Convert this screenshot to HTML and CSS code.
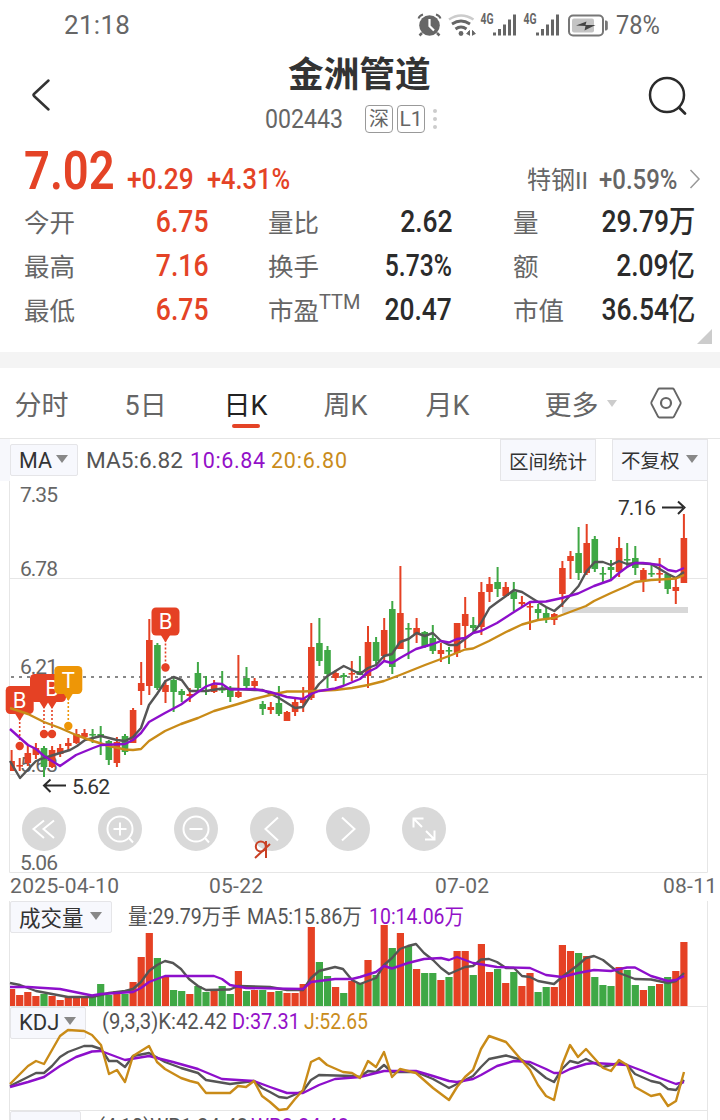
FILE: index.html
```html
<!DOCTYPE html>
<html lang="zh-CN">
<head>
<meta charset="utf-8">
<title>金洲管道 002443</title>
<link rel="stylesheet" href="styles.css">
</head>
<body>
<div class="phone">
  <header class="status">
    <span class="clock">21:18</span>
    <svg class="status-icons" width="192" height="28" viewBox="416 10 192 28">
      <g fill="#666">
        <circle cx="429.5" cy="24.5" r="10.3"/>
        <path d="M422 32l-2.500 2.500M437 32l2.500 2.500" stroke="#666" stroke-width="2.5"/>
      </g>
      <path d="M418.5 17.5q1-3 4.500-4M440.500 17.500q-1-3-4.500-4" fill="none" stroke="#666" stroke-width="2"/>
      <path d="M429.500 18v7l4.500 4.500" fill="none" stroke="#fff" stroke-width="2.200"/>
      <path d="M449 18.500q12-8 24.500 0" fill="none" stroke="#ccc" stroke-width="2.500"/>
      <path d="M452 23q9-6 18 0M455.500 28q5.500-4 11 0" fill="none" stroke="#666" stroke-width="2.800"/>
      <circle cx="461" cy="32.500" r="2.400" fill="#666"/>
      <path d="M466.500 33l3-3.500v5M472.500 34.500v-5l3 3.500" fill="#666" stroke="#666" stroke-width="1"/>
      <g class="net"><text x="480.500" y="22.500" textLength="13" lengthAdjust="spacingAndGlyphs">4G</text><text x="523.500" y="22.500" textLength="13" lengthAdjust="spacingAndGlyphs">4G</text></g>
      <path d="M494.500 31.500v3M499.500 28v6.500M504.500 23.500v11M509.500 18.500v16M514.500 13.500v21M537.500 31.500v3M542.500 28v6.500M547.500 23.500v11M552.500 18.500v16M557.500 13.500v21" stroke="#666" stroke-width="3"/>
      <rect x="569" y="14.500" width="34" height="20" rx="4" fill="none" stroke="#777" stroke-width="2"/>
      <rect x="572" y="17.500" width="22" height="14" rx="2" fill="#c4c4c4"/>
      <path d="M605 19.500h1q1.800 0 1.800 2v6q0 2-1.800 2h-1z" fill="#777"/>
      <path d="M576 24.500l10.500-4-1 3.500h10l-11 5.500 1-4.500z" fill="#444"/>
    </svg>
    <span class="battery">78%</span>
  </header>

  <div class="titlebar">
    <svg class="back" width="24" height="36" viewBox="0 0 24 36"><path d="M20.500 4.500L6 18Q5 19 6 20L20.500 33.500" fill="none" stroke="#333" stroke-width="2.500" stroke-linecap="round"/></svg>
    <div class="title">
      <h1>金洲管道</h1>
      <div class="code-row">
        <span class="code">002443</span>
        <span class="badge">深</span><span class="badge latin">L1</span>
        <span class="dots"><i></i><i></i><i></i></span>
      </div>
    </div>
    <svg class="search" width="44" height="44" viewBox="0 0 44 44"><circle cx="21" cy="20" r="17" fill="none" stroke="#2b2b2b" stroke-width="2.500"/><path d="M33 32.500l6 6" stroke="#2b2b2b" stroke-width="2.800" stroke-linecap="round"/></svg>
  </div>

  <div class="quote">
    <span class="price">7.02</span>
    <span class="change">+0.29</span>
    <span class="change pct">+4.31%</span>
    <span class="sector">特钢II</span>
    <span class="sector-pct">+0.59%</span>
    <svg class="go" width="12" height="20" viewBox="0 0 12 20"><path d="M1.500 1L10 10 1.500 19" fill="none" stroke="#999" stroke-width="1.500"/></svg>
  </div>

  <div class="stats">
    <div class="stat up"><span>今开</span><b>6.75</b></div>
    <div class="stat"><span>量比</span><b>2.62</b></div>
    <div class="stat"><span>量</span><b>29.79万</b></div>
    <div class="stat up"><span>最高</span><b>7.16</b></div>
    <div class="stat"><span>换手</span><b class="percent">5.73%</b></div>
    <div class="stat"><span>额</span><b>2.09亿</b></div>
    <div class="stat up"><span>最低</span><b>6.75</b></div>
    <div class="stat"><span>市盈<sup>TTM</sup></span><b>20.47</b></div>
    <div class="stat"><span>市值</span><b>36.54亿</b></div>
  </div>
  <div class="corner-row"><i class="corner"></i></div>
  <div class="band"></div>

  <nav class="tabs">
    <span class="t1">分时</span><span class="t2">5日</span><span class="t3 active">日K</span><span class="t4">周K</span><span class="t5">月K</span>
    <span class="t6">更多<i class="tri pale"></i></span>
    <svg width="34" height="34" viewBox="0 0 34 34"><path d="M10.500 2.500h13q1 0 1.500 1l6.500 12.500q.5 1 0 2L25 30.500q-.5 1-1.500 1h-13q-1 0-1.500-1L2.500 18q-.5-1 0-2L9 3.500q.5-1 1.500-1z" fill="none" stroke="#666" stroke-width="1.800"/><circle cx="17" cy="17" r="5" fill="none" stroke="#666" stroke-width="2.200"/></svg>
  </nav>

  <section class="chart">
    <svg class="plot" id="plot" width="720" height="682" viewBox="0 438 720 682">
      <path d="M0 438.500H720" stroke="#e6e6e6"/>
      <rect x="0" y="439" width="10" height="42" fill="#f7f8fc"/>
      <path d="M9.500 481V872.500H707.500V481M9.500 578.500H707.500M9.500 774.500H707.500M9.500 901V1120M707.500 901V1120M9.500 1006.500H707.500M9.500 1110.500H707.500" fill="none" stroke="#e6e6e6"/>
      <g class="axis">
        <text x="20" y="502" textLength="38">7.35</text>
        <text x="20" y="576" textLength="38">6.78</text>
        <text x="20" y="674" textLength="38">6.21</text>
        <text x="20" y="772" textLength="38">5.63</text>
        <text x="20" y="870" textLength="38">5.06</text>
        <text x="10" y="892.500" textLength="109">2025-04-10</text>
        <text x="209" y="892.500" textLength="54">05-22</text>
        <text x="435" y="892.500" textLength="54">07-02</text>
        <text x="663" y="892.500" textLength="54">08-11</text>
      </g>
      <path d="M11 677H707" stroke="#888" stroke-width="2" stroke-dasharray="3 5"/>
      <rect x="562" y="607" width="126" height="6" fill="#d8d8d8"/>
      <g id="candles"></g>
      <g id="volumes"></g>
      <g id="markers"></g>
      <g id="lines"></g>
      <g class="peak">
        <text x="72" y="794" textLength="38">5.62</text>
        <text x="618" y="515" textLength="38">7.16</text>
        <path d="M66 785.500H45M50.500 779.500L44 785.500l6.500 6.500M662 507.500h21M678 501.500l6.500 6-6.500 6.500" fill="none" stroke="#2b2b2b" stroke-width="2"/>
      </g>
      <g class="legend">
        <text x="86" y="468" textLength="97" lengthAdjust="spacingAndGlyphs">MA5:6.82</text>
        <text class="purple" x="190" y="468" textLength="75">10:6.84</text>
        <text class="gold" x="271" y="468" textLength="76">20:6.80</text>
        <text x="128" y="924" textLength="113" lengthAdjust="spacingAndGlyphs">量:29.79万手</text>
        <text x="247" y="924" textLength="115" lengthAdjust="spacingAndGlyphs">MA5:15.86万</text>
        <text class="purple" x="369" y="924" textLength="95" lengthAdjust="spacingAndGlyphs">10:14.06万</text>
      </g>
    </svg>

    <div class="pill ma">MA<i class="tri"></i></div>
    <div class="pill range">区间统计</div>
    <div class="pill adjust">不复权<i class="tri"></i></div>
    <div class="pill vol">成交量<i class="tri"></i></div>
    <div class="pill kdj">KDJ<i class="tri"></i></div>
    <div class="pill wr"></div>
    <svg class="plot over" width="720" height="682" viewBox="0 438 720 682">
      <g id="kdj-lines"></g>
      <g class="legend">
        <text x="102" y="1029" textLength="125" lengthAdjust="spacingAndGlyphs">(9,3,3)K:42.42</text>
        <text class="purple" x="232" y="1029" textLength="68" lengthAdjust="spacingAndGlyphs">D:37.31</text>
        <text class="gold" x="304" y="1029" textLength="64" lengthAdjust="spacingAndGlyphs">J:52.65</text>
        <text x="98" y="1134" textLength="150" lengthAdjust="spacingAndGlyphs">(4,10)WR1:24.48</text>
        <text class="purple" x="251" y="1134" textLength="98" lengthAdjust="spacingAndGlyphs">WR2:24.48</text>
      </g>
    </svg>

    <div class="controls">
      <span><svg viewBox="0 0 44 44"><path d="M22 13.500L11.500 22 22 31M32 13.500L21.500 22 32 31"/></svg></span>
      <span><svg viewBox="0 0 44 44"><circle cx="22" cy="22" r="12.500"/><path d="M15.500 22h13M22 15.500v13M31 31l4 4.500"/></svg></span>
      <span><svg viewBox="0 0 44 44"><circle cx="22" cy="22" r="12.500"/><path d="M15.500 22h13M31 31l4 4.500"/></svg></span>
      <span><svg viewBox="0 0 44 44"><path d="M28 10.500L15.500 22 28 33.500"/></svg><svg class="scribble" viewBox="0 0 18 20"><path d="M13 2v17M2 19L17 5"/><circle cx="7.800" cy="7.500" r="5"/></svg></span>
      <span><svg viewBox="0 0 44 44"><path d="M16 10.500L28.500 22 16 33.500"/></svg></span>
      <span><svg viewBox="0 0 44 44"><path d="M11.500 20.500v-9h10M11.500 11.500l8.500 8.500M24 24l8.500 8.500M23 32.500h9.500v-9"/></svg></span>
    </div>
  </section>
</div>
<script src="chart.js"></script>
</body>
</html>
```
FILE: styles.css
```css
* { box-sizing: border-box; }
body { margin: 0; background: #fff; font-family: Roboto, "Noto Sans CJK SC", sans-serif; color: #666; }
.phone { width: 720px; height: 1120px; overflow: hidden; background: #fff; }
.phone span, .phone b { white-space: nowrap; }

.status { display: flex; align-items: center; height: 50px; padding-left: 64px; font-size: 26px; }
.clock { width: 352px; letter-spacing: .3px; }
.status-icons { display: block; flex: none; }
.net text { font: 700 14px Roboto, sans-serif; fill: #666; }
.battery { margin-left: 8px; transform: scaleX(.91); transform-origin: left; }

.titlebar { display: flex; height: 90px; padding: 0 30px 0 28px; align-items: flex-start; }
.back { margin-top: 26px; flex: none; }
.title { flex: 1; padding-left: 213px; }
.title h1 { margin: 0 0 0 23px; height: 50px; font-size: 35.7px; line-height: 51px; font-weight: 700; color: #333; }
.code-row { display: flex; align-items: center; height: 38px; }
.code { width: 100px; font-size: 26px; transform: scaleX(.89); transform-origin: left; }
.badge { width: 28px; height: 28px; border: 1px solid #999; border-radius: 4px; font-size: 20px; line-height: 26px; text-align: center; margin-right: 4px; }
.badge.latin { font-size: 21px; }
.dots { display: flex; flex-direction: column; gap: 4px; margin-left: 4px; }
.dots i { width: 4px; height: 4px; border-radius: 50%; background: #ccc; }
.search { flex: none; margin: 25px 0 0; }

.quote { display: flex; align-items: baseline; height: 60px; padding-left: 24px; line-height: 62px; }
.quote span { transform-origin: left; transform: scaleX(.87); }
.quote .price { width: 103px; font-size: 53px; font-weight: 600; color: #e44326; transform: scaleX(.855); }
.quote .change { width: 80px; font-size: 29px; font-weight: 500; color: #e44326; transform: scaleX(.905); }
.quote .pct { width: 320px; transform: scaleX(.875); }
.quote .sector { width: 72px; font-size: 24.5px; transform: scaleX(.98); }
.quote .sector-pct { width: 90px; font-size: 28px; font-weight: 500; transform: scaleX(.855); }

.stats { display: grid; grid-template-columns: 183px 184px 182px; column-gap: 61px; grid-auto-rows: 44px; padding-left: 24px; }
.stat { display: flex; justify-content: space-between; align-items: center; font-size: 25.5px; line-height: 44px; }
.stat b { font-size: 30.5px; font-weight: 500; color: #2b2b2b; transform: scaleX(.865); transform-origin: right; }
.stat b.percent { transform: scaleX(.81); }
.stat span { padding-top: 1px; height: 44px; }
.stat sup { font-size: 20px; line-height: 0; position: relative; top: -2px; }
.stat.up b { color: #e44326; transform: translateX(1px) scaleX(.87); }
.corner-row { height: 20px; padding: 0 8px 8px; display: flex; justify-content: flex-end; align-items: flex-end; }
.corner { width: 15px; height: 15px; flex: none; background: #ccc; clip-path: polygon(100% 0, 100% 100%, 0 100%); }
.band { height: 16px; background: #f4f4f4; }

.tabs { display: grid; grid-template-columns: 110px 99px 100px 102px 119px 104px 40px; height: 70px; padding-left: 14.5px; align-items: center; font-size: 27px; }
.tabs > span { line-height: 70px; height: 70px; padding-top: 3px; }
.active { color: #222; position: relative; }
.active::after { content: ""; position: absolute; left: 8px; top: 56px; width: 28px; height: 4px; border-radius: 2px; background: #e44326; }
.tri { display: inline-block; border: 6px solid transparent; border-top: 8px solid #888; border-bottom: 0; vertical-align: middle; margin-left: 5px; }
.tri.pale { border-top-color: #ccc; border-left-width: 5.5px; border-right-width: 5.5px; border-top-width: 7px; margin: -8px 0 0 8px; }

.chart { position: relative; height: 682px; }
.plot { display: block; }
.over { position: absolute; left: 0; top: 0; }
.axis text { font-size: 21px; fill: #666; }
.legend text { font-size: 21.5px; fill: #555; }
.legend .purple { fill: #9310c8; }
.legend .gold { fill: #c98c1b; }
.peak text { font-size: 21px; fill: #333; }
.flag { font-size: 22px; fill: #fff; text-anchor: middle; }

.pill { position: absolute; display: flex; align-items: center; left: 10px; height: 32px; padding-left: 8px; border: 1px solid #e5e5e8; border-radius: 2px; background: #f7f8fd; color: #333; font-size: 22px; white-space: nowrap; }
.pill.ma { top: 6px; width: 68px; font-size: 21.5px; padding-top: 1px; }
.pill.ma .tri { margin: -3px 0 0 4px; }
.pill.range { left: 500px; top: 1px; width: 96px; height: 42px; font-size: 19.5px; border-radius: 0; }
.pill.adjust { left: 612px; top: 1px; width: 96px; height: 42px; padding-bottom: 2px; font-size: 19.5px; border-radius: 0; }
.pill.adjust .tri { margin-left: 6px; }
.pill.vol { top: 463px; width: 102px; padding-bottom: 1px; font-size: 21.5px; }
.pill.vol .tri { margin: -2px 0 0 6px; }
.pill.kdj { top: 568.5px; width: 76px; }
.pill.kdj .tri { margin-top: -3px; }
.pill.wr { top: 673px; width: 71px; }

.controls { position: absolute; left: 22px; top: 369px; display: flex; gap: 32px; }
.controls span { position: relative; width: 44px; height: 44px; border-radius: 50%; background: #d9d9d9; }
.controls svg { display: block; fill: none; stroke: #fff; stroke-width: 2; }
.controls .scribble { position: absolute; left: 3px; top: 32px; width: 18px; height: 20px; stroke: #c94024; }
```
FILE: chart.js
```js
const STEP = 8.1, X0 = 11.6, RED = '#e54124', GREEN = '#3fa845';

// colour, high, body top, body bottom, low, volume top
const days = `r 750 761 771 771 989|r 758 765 766 771 995|r 745 753 763 766 992|r 743 748 755 759 996|g 746 748 767 777 994|r 746 750 767 768 996|r 744 748 754 757 1000|r 738 743 746 750 997|r 729 734 743 744 997|r 729 733 737 738 997|g 729 734 735 743 995|g 726 734 736 755 984|g 740 741 760 765 995|r 737 742 763 767 991|g 734 736 752 755 994|r 708 710 743 743 982|r 662 683 691 705 957|r 619 640 686 695 933|g 643 645 688 690 958|r 680 685 692 703 976|g 678 680 692 712 990|g 689 691 695 702 991|r 688 694 696 702 994|g 662 673 688 693 986|g 676 690 692 695 992|r 680 685 692 693 991|g 671 689 690 693 986|g 686 690 697 702 994|r 655 692 697 698 971|g 667 678 686 688 991|r 678 681 686 690 990|g 701 704 709 715 990|r 702 707 710 714 992|g 686 703 714 716 991|r 711 712 721 721 993|r 698 702 712 716 993|r 687 699 703 712 984|r 623 647 698 700 927|g 618 643 661 666 962|g 646 650 674 688 976|r 670 673 678 681 987|g 673 675 677 685 993|r 661 673 674 681 981|g 656 671 675 675 983|r 626 642 676 688 960|g 637 642 661 664 975|r 618 630 656 660 925|g 601 609 667 674 948|r 566 613 649 649 933|g 623 628 629 659 946|r 618 628 634 643 969|g 631 632 647 648 973|g 625 638 651 654 973|r 643 650 654 662 980|g 647 650 651 664 977|r 623 623 653 657 951|r 597 614 626 648 951|g 617 625 628 632 975|r 582 592 627 635 944|r 577 584 592 602 972|g 567 582 589 597 969|r 582 587 596 597 983|g 582 592 599 611 972|r 596 602 604 607 986|r 603 606 607 630 973|g 604 609 613 620 992|g 607 613 618 623 987|r 613 614 620 625 987|r 561 568 594 607 945|r 551 556 561 579 951|g 527 553 573 580 953|r 524 543 573 575 956|g 536 539 569 572 977|g 567 573 574 582 985|g 560 567 570 580 986|r 537 548 572 577 967|g 543 559 560 568 970|g 546 558 568 575 985|r 568 570 580 592 990|g 563 573 574 577 986|r 558 573 574 583 984|g 573 574 589 594 977|r 578 587 591 604 971|r 514 538 583 583 942`
  .split('|').map(s => s.split(' '));

const el = id => document.getElementById(id);
let candles = '', volumes = '';
days.forEach(([c, high, top, bottom, low, vol], i) => {
  const x = X0 + i * STEP, fill = c === 'r' ? RED : GREEN;
  const left = Math.max(10, x - 3.3), w = x + 3.3 - left;
  candles += `<g fill="${fill}"><rect x="${x - 1}" y="${high}" width="2" height="${low - high}"/><rect x="${left}" y="${top}" width="${w}" height="${Math.max(1.6, bottom - top)}"/></g>`;
  const vl = Math.max(10, x - 3.6);
  volumes += `<rect x="${vl}" y="${vol}" width="${x + 3.6 - vl}" height="${1006 - vol}" fill="${fill}"/>`;
});
el('candles').innerHTML = candles;
el('volumes').innerHTML = volumes;

const marker = (cx, top, dotY, color, letter) => `<g fill="${color}">
  <path d="M${cx} ${top + 28}V${dotY}" stroke="${color}" stroke-width="1.6" stroke-dasharray="2 2"/>
  <rect x="${cx - 14}" y="${top}" width="28" height="28" rx="4.500"/>
  <path d="M${cx - 5} ${top + 27}h10l-5 8z"/><circle cx="${cx}" cy="${dotY}" r="4.200"/></g>
  <text class="flag" x="${cx}" y="${top + 21.5}">${letter}</text>`;
el('markers').innerHTML =
  marker(19.7, 686, 746, RED, 'B') + marker(44, 674, 734, RED, '') + marker(52, 674, 734, RED, 'B') +
  marker(68.3, 666, 726, '#ee9606', 'T') + marker(165.5, 607.5, 667.5, RED, 'B');

const line = (pts, color) => `<polyline points="${pts}" fill="none" stroke="${color}" stroke-width="2.400" stroke-linejoin="round"/>`;
const GRAY = '#555', PURPLE = '#8d0fcb', GOLD = '#c98b18';

el('lines').innerHTML =
  line('10,761 20,778 36,761 44,758 60,753 70,750 77,746 85,740 93,738 101,736 109,738 117,740 125,741 133,737 141,728 149,705 157,694 165.5,681 173.6,677 181.7,680 189.8,691 206,691 222,688.5 238,689 254.6,690 262.7,690 270.8,694 279,698 287,703 295,708 303,707 311,695 319,684 327.5,676 343.7,666 352,670 360,674 368,668 376,665 384,656 392,654 400,642 408.5,639 416.6,633 424.7,636 432.8,633 441,641 449,645 457,645 465,639 473,633 481,623 489.5,608 497.6,602 506,596 514,590 522,592 530,597 538,602 546,607 554.3,611 562.4,604 570.5,595 578.6,586 586.7,571 594.8,562 603,562 611,565 619,561 627,564 635,563 651,564 659.6,569 668,574 676,578 684,572', GRAY) +
  line('10,708 28,714 44,722 60,728 76,735 93,741 109,746 125,749.5 133,750 141,749 149,741 165,731 181,724 198,718 214,711 238,704 254,699 270,695 287,691.5 303,691.5 335,690 352,688 368,685 384,681 400,675 425,665 449,656 465,649.5 473,648.5 489,641 506,632 522,624.5 538,620 554,618 570,612 586,606 594,601 611,593 627,586 635,582 651,580 668,579 676,578.5 684,575', GOLD) +
  line('10,729 20,738 28,745 36,749 44,756 60,766 76,755 93,748 101,745 125,744 133,740 141,733 149,722 165,713 181,704.5 198,692 206,686.5 214,683.5 222,684 230,689.5 254,689 270,692 287,697 303,699 311,694 319,691 335,688.5 343,686 360,679 368,672 376,668 384,661 392,663 400,658 416,649 433,644 441,641 449,642.5 457,639 465,638 473,633 481,631 497,623 514,612 530,602 546,601.5 562,598 578,593.5 594,586 611,580 619,573 627,567 635,563 643,563 660,565 668,570 676,571.5 684,568', PURPLE) +
  line('10,983 20,985 36,991 52,994 68,997 92,997 109,993 125,991 133,989 141,982 149,971 157,965 165,961 173,963 181,969 189,979 198,986 206,990 230,989.5 238,986 270,987 287,990 303,990 311,978 319,971 335,967 343,969 352,980 360,984 376,978 384,965 392,958 400,949 408,946 416,944 424,953 433,960 441,968 449,974 465,967 473,966 481,959.5 489,959 497,962 506,968 514,968 522,976 530,977 538,981 554,984 562,977 570,971 578,965 586,958 594,956 603,960 619,973 635,979 651,979.5 668,983 676,981 684,973', GRAY) +
  line('10,987 28,987 60,989 92,995.5 101,994 133,992 141,988 149,982 165,976 181,976 214,976 222,979 230,985 246,988 303,989 311,982 335,979 352,979 360,977 376,972 384,966 392,968.5 408,963 424,959 441,958 449,960 457,957 473,963 497,967 530,968 546,975 562,977 578,973 594,970 611,971 627,967.5 635,967.5 651,976 668,981 676,980 684,976', PURPLE);

el('kdj-lines').innerHTML =
  line('10,1086 36,1073 44,1073 52,1066 60,1057 68,1052 76,1049 84,1046 92,1046 101,1049 109,1061 117,1061 125,1067 133,1056 149,1053 165,1062 181,1068 198,1073 206,1080 230,1084 254,1081 262,1088 270,1092 279,1097 287,1098 303,1091 311,1080 319,1075 352,1076 360,1077 368,1071 376,1072 384,1065 392,1072 416,1072 433,1079 449,1088 465,1080 473,1076 481,1067 489,1059 506,1055.5 522,1060 530,1065 546,1078 554,1082 562,1069 570,1061 578,1063 586,1059 594,1063 603,1067 619,1063 627,1065 635,1074 651,1081 660,1083 668,1089 676,1090 684,1080', GRAY) +
  line('10,1087 28,1082 44,1077 60,1066 76,1057 92,1051.5 101,1051 117,1057 125,1060 149,1056 173,1062 198,1069 222,1079 254,1081 270,1087 287,1093 303,1093 319,1085 335,1079 360,1077 384,1071 416,1071 433,1076 449,1081 457,1082 473,1079 481,1075 497,1066 514,1061 530,1062 546,1069 554,1073 562,1073 570,1069 586,1064 594,1063 627,1065 643,1071 660,1078 676,1084 684,1082', PURPLE) +
  line('10,1084 28,1066 36,1061 44,1064 52,1050 60,1036 68,1030 84,1031 92,1035 101,1045 109,1074 117,1070 125,1082 133,1056 149,1046 157,1062 165,1069 181,1078 190,1081 198,1083 206,1093 230,1093 238,1086 246,1087 254,1081 262,1096 270,1102 279,1110 287,1109 295,1099 303,1090 311,1062 319,1058 327,1065 343,1072 352,1073 360,1078 368,1061 376,1067 384,1052 392,1077 400,1069 416,1073 433,1088 449,1100 457,1087 465,1077 473,1070 481,1049 489,1036 506,1042 530,1070 538,1085 546,1096 554,1100 562,1065 570,1045 578,1057 586,1049 603,1068 611,1071 619,1060 627,1065 635,1087 651,1096 660,1094 668,1106 676,1101 684,1072', GOLD);
```
